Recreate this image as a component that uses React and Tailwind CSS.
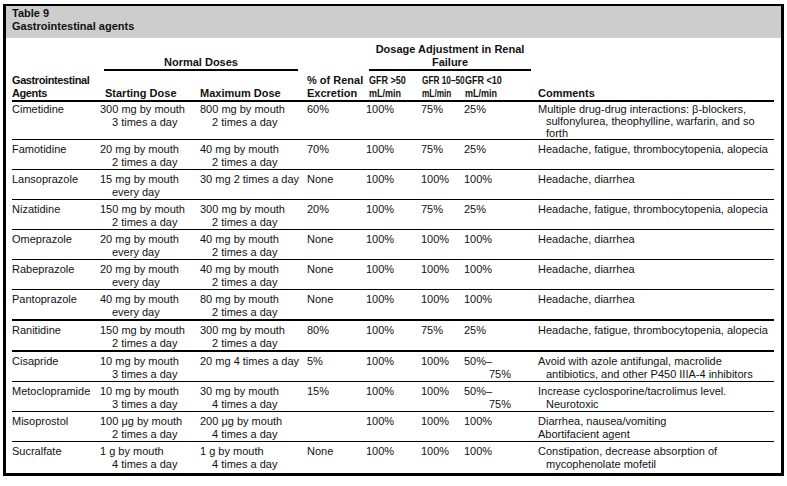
const rows = [
  { agent: 'Cimetidine', start: ['300 mg by mouth', '3 times a day'], max: ['800 mg by mouth', '2 times a day'], renal: '60%', g1: '100%', g2: '75%', g3: ['25%'], comments: ['Multiple drug-drug interactions: β-blockers,', 'sulfonylurea, theophylline, warfarin, and so', 'forth'], tall: true },
  { agent: 'Famotidine', start: ['20 mg by mouth', '2 times a day'], max: ['40 mg by mouth', '2 times a day'], renal: '70%', g1: '100%', g2: '75%', g3: ['25%'], comments: ['Headache, fatigue, thrombocytopenia, alopecia'] },
  { agent: 'Lansoprazole', start: ['15 mg by mouth', 'every day'], max: ['30 mg 2 times a day'], renal: 'None', g1: '100%', g2: '100%', g3: ['100%'], comments: ['Headache, diarrhea'] },
  { agent: 'Nizatidine', start: ['150 mg by mouth', '2 times a day'], max: ['300 mg by mouth', '2 times a day'], renal: '20%', g1: '100%', g2: '75%', g3: ['25%'], comments: ['Headache, fatigue, thrombocytopenia, alopecia'] },
  { agent: 'Omeprazole', start: ['20 mg by mouth', 'every day'], max: ['40 mg by mouth', '2 times a day'], renal: 'None', g1: '100%', g2: '100%', g3: ['100%'], comments: ['Headache, diarrhea'] },
  { agent: 'Rabeprazole', start: ['20 mg by mouth', 'every day'], max: ['40 mg by mouth', '2 times a day'], renal: 'None', g1: '100%', g2: '100%', g3: ['100%'], comments: ['Headache, diarrhea'] },
  { agent: 'Pantoprazole', start: ['40 mg by mouth', 'every day'], max: ['80 mg by mouth', '2 times a day'], renal: 'None', g1: '100%', g2: '100%', g3: ['100%'], comments: ['Headache, diarrhea'], thick: true },
  { agent: 'Ranitidine', start: ['150 mg by mouth', '2 times a day'], max: ['300 mg by mouth', '2 times a day'], renal: '80%', g1: '100%', g2: '75%', g3: ['25%'], comments: ['Headache, fatigue, thrombocytopenia, alopecia'], thick: true },
  { agent: 'Cisapride', start: ['10 mg by mouth', '3 times a day'], max: ['20 mg 4 times a day'], renal: '5%', g1: '100%', g2: '100%', g3: ['50%–', '75%'], comments: ['Avoid with azole antifungal, macrolide', 'antibiotics, and other P450 IIIA-4 inhibitors'] },
  { agent: 'Metoclopramide', start: ['10 mg by mouth', '3 times a day'], max: ['30 mg by mouth', '4 times a day'], renal: '15%', g1: '100%', g2: '100%', g3: ['50%–', '75%'], comments: ['Increase cyclosporine/tacrolimus level.', 'Neurotoxic'] },
  { agent: 'Misoprostol', start: ['100 μg by mouth', '2 times a day'], max: ['200 μg by mouth', '4 times a day'], renal: '', g1: '100%', g2: '100%', g3: ['100%'], comments: ['Diarrhea, nausea/vomiting', 'Abortifacient agent'], flat: true },
  { agent: 'Sucralfate', start: ['1 g by mouth', '4 times a day'], max: ['1 g by mouth', '4 times a day'], renal: 'None', g1: '100%', g2: '100%', g3: ['100%'], comments: ['Constipation, decrease absorption of', 'mycophenolate mofetil'], last: true },
];

function Lines({ lines, indent }) {
  return (
    <div>
      {lines.map((l, i) => (
        <div key={i} className={i > 0 ? indent : ''}>
          {l}
        </div>
      ))}
    </div>
  );
}

function Row({ r }) {
  let cls = 'grid grid-cols-[88px_100px_107px_59px_55px_43px_74px_1fr] whitespace-nowrap leading-[13px] pt-[3px] border-b border-black';
  if (r.tall) cls = 'grid grid-cols-[88px_100px_107px_59px_55px_43px_74px_1fr] whitespace-nowrap leading-[13px] pt-[1px] border-b border-black';
  if (r.thick) cls = 'grid grid-cols-[88px_100px_107px_59px_55px_43px_74px_1fr] whitespace-nowrap leading-[13px] pt-[3px] border-b-2 border-black';
  if (r.last) cls = 'grid grid-cols-[88px_100px_107px_59px_55px_43px_74px_1fr] whitespace-nowrap leading-[13px] pt-[3px]';
  return (
    <div className={cls}>
      <div>{r.agent}</div>
      <Lines lines={r.start} indent="pl-[12px]" />
      <Lines lines={r.max} indent="pl-[12px]" />
      <div>{r.renal}</div>
      <div>{r.g1}</div>
      <div>{r.g2}</div>
      <Lines lines={r.g3} indent="pl-[25px]" />
      <div className={r.tall ? 'leading-[12px]' : ''}>
        <Lines lines={r.comments} indent={r.flat ? '' : 'pl-[8px]'} />
      </div>
    </div>
  );
}

export default function App() {
  return (
    <div className="w-[787px] h-[486px] bg-white pt-[4px] pl-[3px] font-['Liberation_Sans',Arial,sans-serif] text-[11px] text-[#111]">
      <div className="w-[781px] h-[472px] border-[3px] border-t-2 border-black flex flex-col">
        <div className="h-[32px] shrink-0 bg-[#cdcdcd] pl-[6px] pt-[1px] font-bold leading-[13px]">
          <div>Table 9</div>
          <div>Gastrointestinal agents</div>
        </div>
        <div className="pl-[6px] pr-[7px]">
          <div className="grid grid-cols-[88px_100px_107px_59px_55px_43px_74px_1fr] gap-y-[3px] pt-[5px] border-b-2 border-black font-bold leading-[13px] whitespace-nowrap">
            <div className="col-start-2 col-span-2 row-start-1 self-end ml-[4px] mr-[9px] border-b-2 border-black text-center">
              Normal Doses
            </div>
            <div className="col-start-5 col-span-3 row-start-1 self-end ml-[3px] mr-[7px] border-b-2 border-black text-center">
              <div>Dosage Adjustment in Renal</div>
              <div>Failure</div>
            </div>
            <div className="col-start-1 row-start-2 self-end tracking-[-0.4px]">
              <div>Gastrointestinal</div>
              <div>Agents</div>
            </div>
            <div className="col-start-2 row-start-2 self-end pl-[5px]">Starting Dose</div>
            <div className="col-start-3 row-start-2 self-end">Maximum Dose</div>
            <div className="col-start-4 row-start-2 self-end">
              <div>% of Renal</div>
              <div>Excretion</div>
            </div>
            <div className="col-start-5 row-start-2 self-end pl-[3px]">
              <div className="scale-x-[0.82] origin-left">
                <div>GFR &gt;50</div>
                <div>mL/min</div>
              </div>
            </div>
            <div className="col-start-6 row-start-2 self-end pl-[1px]">
              <div className="scale-x-[0.75] origin-left">
                <div>GFR 10–50</div>
                <div>mL/min</div>
              </div>
            </div>
            <div className="col-start-7 row-start-2 self-end pl-[1px]">
              <div className="scale-x-[0.82] origin-left">
                <div>GFR &lt;10</div>
                <div>mL/min</div>
              </div>
            </div>
            <div className="col-start-8 row-start-2 self-end">Comments</div>
          </div>
          {rows.map((r) => (
            <Row key={r.agent} r={r} />
          ))}
        </div>
      </div>
    </div>
  );
}
